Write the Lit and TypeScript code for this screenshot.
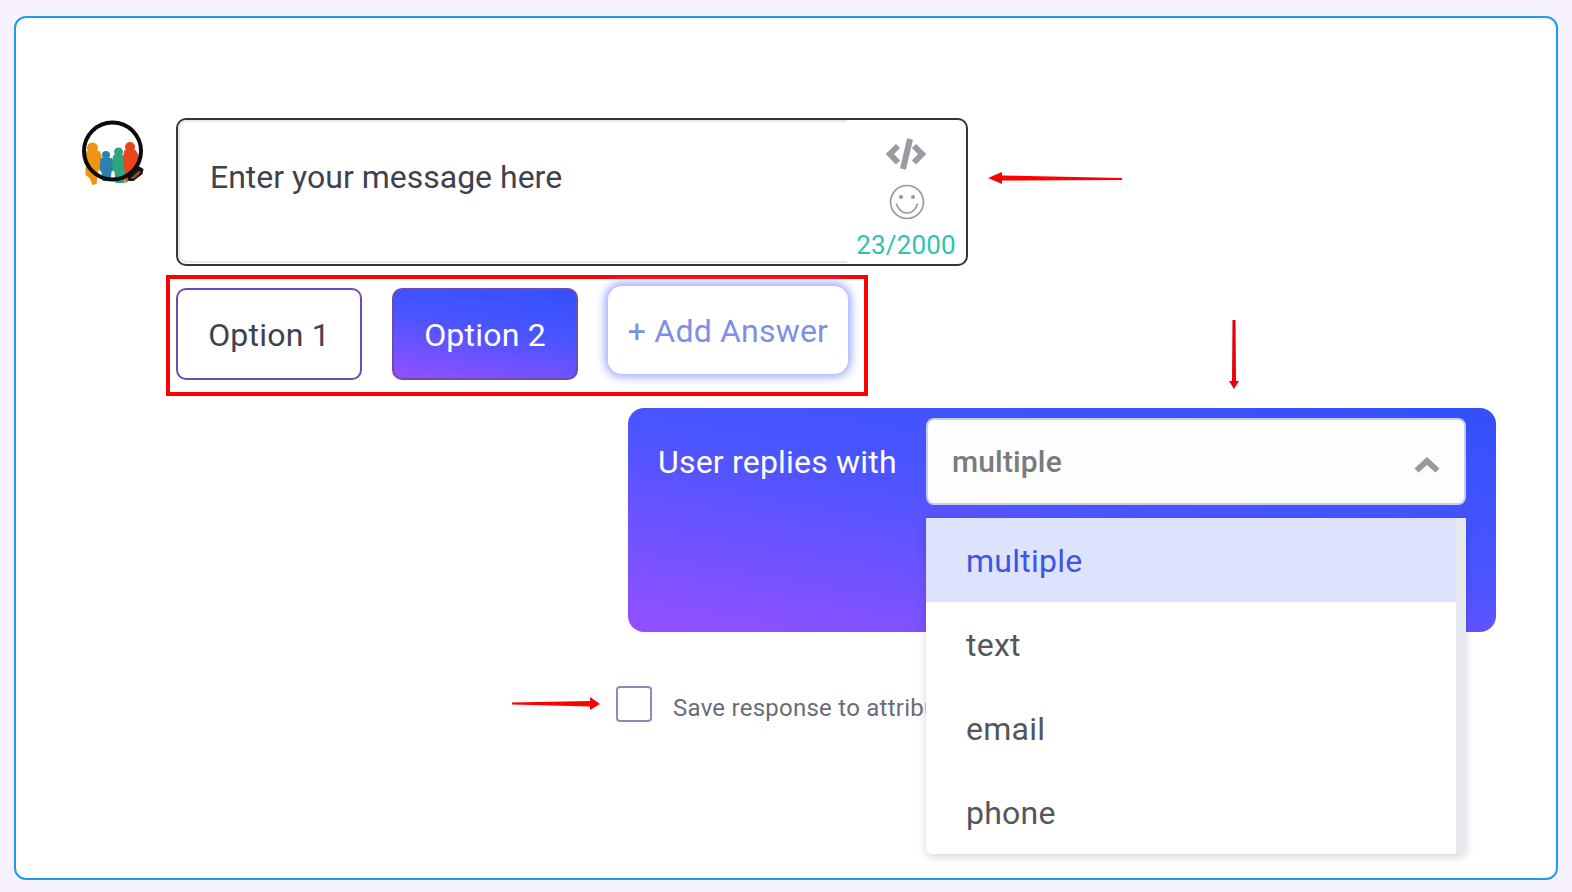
import { LitElement, html, css } from "lit";
import { customElement } from "lit/decorators.js";

@customElement("app-root")
export class AppRoot extends LitElement {
  static styles = css`
    :host { display: block; width: 1572px; height: 892px; background: #f7f2fe; overflow: hidden; font-family: Roboto, sans-serif; }
    .page { padding: 16px 14px 12px; box-sizing: border-box; height: 892px; }
    .frame { position: relative; box-sizing: border-box; width: 1544px; height: 864px; border: 2px solid #1d9bf0; border-radius: 12px; background: #fff; padding-top: 100px; }
    .msg-row { display: flex; height: 148px; padding-left: 64px; }
    .logo { width: 70px; height: 70px; margin-right: 26px; flex: none; }
    .box { box-sizing: border-box; width: 792px; height: 148px; border: 2px solid #33353b; border-radius: 10px; display: flex; background: #fff; overflow: hidden; }
    .msg-text { box-sizing: border-box; width: 669px; height: 143px; border: 2px solid #e8e8e8; border-right: none; border-radius: 9px 0 0 9px; padding: 33px 0 0 30px; font-size: 32px; line-height: 44px; color: #3f424e; }
    .tools { flex: 1; display: flex; flex-direction: column; align-items: center; position: relative; }
    .code { width: 40px; height: 33px; margin: 17px 1px 0 0; }
    .smile { width: 36px; height: 36px; margin-top: 14px; }
    .count { font-size: 26px; line-height: 30px; color: #2ec4ae; margin: 10px 1px 0 0; letter-spacing: 0.15px; }
    .options { box-sizing: border-box; display: flex; align-items: flex-start; gap: 30px; width: 702px; height: 121px; margin: 9px 0 0 150px; border: 4px solid #f00; padding: 9px 0 0 6px; }
    .opt { box-sizing: border-box; width: 186px; height: 92px; padding-top: 2px; border-radius: 10px; display: flex; align-items: center; justify-content: center; font-size: 32px; letter-spacing: 0.2px; }
    .o1 { border: 2px solid #6b4bb5; color: #3f424e; background: #fff; }
    .o2 { border: 2px solid #6b4bb5; color: #fff; background: linear-gradient(190deg, #3350fb 0%, #4a55ff 45%, #9450ff 100%); }
    .add { box-sizing: border-box; width: 240px; height: 88px; margin-top: -2px; padding-top: 2px; border-radius: 14px; background: #fff; color: #7d8fe8; font-size: 32px; letter-spacing: 0.2px; display: flex; align-items: center; justify-content: center; box-shadow: 0 0 10px 3px #98a8fb; }
    .panel { position: relative; box-sizing: border-box; width: 868px; height: 224px; margin: 12px 0 0 612px; border-radius: 16px; background: linear-gradient(190deg, #3350fb 0%, #4a55ff 45%, #9450ff 100%); padding: 10px 30px 0 30px; display: flex; align-items: flex-start; }
    .label { width: 268px; height: 87px; line-height: 88px; font-size: 32px; letter-spacing: 0.2px; color: #fff; flex: none; }
    .select { box-sizing: border-box; width: 540px; height: 87px; border: 2px solid #c8cde8; border-radius: 8px; background: #fdfdfd; display: flex; align-items: center; justify-content: space-between; padding: 0 24px 0 24px; font-size: 30px; font-weight: 500; letter-spacing: 0.15px; color: #7a7a80; }
    .chev { width: 26px; height: 17px; margin-top: 8px; }
    .dropdown { position: absolute; left: 298px; top: 110px; width: 540px; height: 336px; background: #fff; border-radius: 0 0 6px 6px; box-shadow: 0 3px 8px rgba(0,0,0,.16); overflow: hidden; z-index: 2; }
    .track { position: absolute; right: 0; top: 0; bottom: 0; width: 10px; background: #e6e9ed; }
    .item { box-sizing: border-box; width: 530px; height: 84px; padding-left: 40px; line-height: 86px; font-size: 32px; letter-spacing: 0.25px; color: #55555c; }
    .item.sel { background: #dee3fd; color: #3a55e8; }
    .check-row { display: flex; align-items: center; margin: 54px 0 0 600px; height: 36px; white-space: nowrap; }
    .check { box-sizing: border-box; width: 36px; height: 36px; border: 2px solid #8f8ab5; border-radius: 4px; margin-right: 21px; flex: none; }
    .check-label { font-size: 24px; letter-spacing: 0.25px; color: #6b6c77; margin-top: 8px; }
    .arrow { position: absolute; }
    .a1 { left: 970px; top: 150px; width: 136px; height: 20px; }
    .a2 { left: 1208px; top: 302px; width: 20px; height: 70px; }
    .a3 { left: 496px; top: 676px; width: 90px; height: 20px; }
  `;

  render() {
    return html`<div class="page"><div class="frame">
      <div class="msg-row">
        <svg class="logo" viewBox="0 0 70 70">
          <g transform="translate(-80.500,-118)">
            <g fill="#ee9410"><circle cx="93" cy="148" r="5.500"/><path d="M87 151h13l2 4v12l-3 3-2 14-4 1-3-7-4-3 0-6 1-4-1-8z"/></g>
            <g fill="#2f7fae"><circle cx="106.500" cy="155" r="4"/><path d="M101 158h11l2 3v9l-2 2-1 9h-8l-1-9-2-2z"/></g>
            <g fill="#2fa57f"><circle cx="119" cy="152" r="4.500"/><path d="M114 155h11l2 3v12l-1 2-1 11h-9l-1-11-2-2 0-12z"/></g>
            <g fill="#e8451a"><circle cx="130.500" cy="147" r="5"/><path d="M125 150h11l3 5-1 11-8 14-4 3-1-14-1-3v-12z"/></g>
            <circle cx="113" cy="151" r="28.500" fill="none" stroke="#0b0b0b" stroke-width="4"/>
            <path d="M128 177l11-11 5 3-1 5-9 7-5 0z" fill="#111"/>
            <path d="M131 178l8-7 3 1-6 6-3 1z" fill="#8a4a2c"/>
          </g>
        </svg>
        <div class="box">
          <div class="msg-text">Enter your message here</div>
          <div class="tools">
            <svg class="code" viewBox="0 0 40 33"><g fill="none" stroke="#9a9aa2" stroke-width="6"><path d="M12 9l-8 8 8 8.500"/><path d="M28 9l8 8-8 8.500"/><path d="M24 2l-7 30"/></g></svg>
            <svg class="smile" viewBox="0 0 36 36"><g fill="none" stroke="#979797" stroke-width="1.600"><circle cx="18" cy="18" r="16.500"/><path d="M7.500 20c2 6 6 9 10.500 9s8.500-3 10.500-9" stroke-linecap="round"/></g><circle cx="12" cy="13" r="2" fill="#979797"/><circle cx="24" cy="13" r="2" fill="#979797"/></svg>
            <div class="count">23/2000</div>
          </div>
        </div>
      </div>
      <div class="options">
        <div class="opt o1">Option 1</div>
        <div class="opt o2">Option 2</div>
        <div class="add">+ Add Answer</div>
      </div>
      <div class="panel">
        <div class="label">User replies with</div>
        <div class="select">multiple
          <svg class="chev" viewBox="0 0 26 17"><path d="M13 0l12.500 11.500-4 4L13 8l-8.500 7.500-4-4z" fill="#999"/></svg>
        </div>
        <div class="dropdown">
          <div class="track"></div>
          <div class="item sel">multiple</div>
          <div class="item">text</div>
          <div class="item">email</div>
          <div class="item">phone</div>
        </div>
      </div>
      <div class="check-row"><div class="check"></div><div class="check-label">Save response to attribute</div></div>
      <svg class="arrow a1" viewBox="0 0 136 20"><path d="M2 10l14-6v3.500l120 2.500v2L16 12.500V16z" fill="#f00"/></svg>
      <svg class="arrow a2" viewBox="0 0 20 70"><path d="M8.500 0h3l.5 61h3l-5 8-5-8h3z" fill="#e8000b"/></svg>
      <svg class="arrow a3" viewBox="0 0 90 20"><path d="M0 8.500L78 7V3l10 7-10 6v-3.500L0 10.500z" fill="#f00"/></svg>
    </div></div>`;
  }
}
